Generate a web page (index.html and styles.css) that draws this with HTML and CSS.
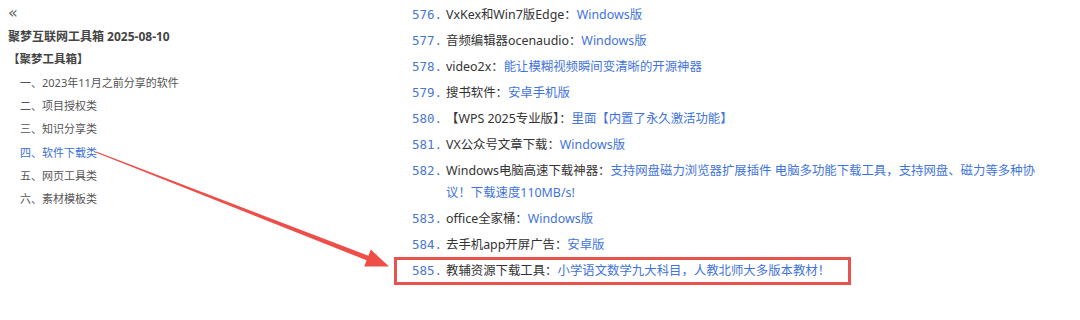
FILE: index.html
```html
<!DOCTYPE html>
<html lang="zh-CN">
<head>
  <meta charset="UTF-8">
  <title>聚梦互联网工具箱</title>
  <link rel="stylesheet" href="styles.css">
</head>
<body>

  <div class="page">
    <div class="toc">
      <div class="toc-toggle">&laquo;</div>
      <div class="toc-title">聚梦互联网工具箱 2025-08-10</div>
      <div class="toc-group">【聚梦工具箱】</div>
      <ul class="toc-list">
        <li>一、2023年11月之前分享的软件</li>
        <li>二、项目授权类</li>
        <li>三、知识分享类</li>
        <li class="active">四、软件下载类</li>
        <li>五、网页工具类</li>
        <li>六、素材模板类</li>
      </ul>
    </div>

    <ol class="soft-list">
      <li><span class="num">576.</span><span class="txt">VxKex和Win7版Edge：<a>Windows版</a></span></li>
      <li><span class="num">577.</span><span class="txt">音频编辑器ocenaudio：<a>Windows版</a></span></li>
      <li><span class="num">578.</span><span class="txt">video2x：<a>能让模糊视频瞬间变清晰的开源神器</a></span></li>
      <li><span class="num">579.</span><span class="txt">搜书软件：<a>安卓手机版</a></span></li>
      <li><span class="num">580.</span><span class="txt">【WPS 2025专业版】：<a>里面【内置了永久激活功能】</a></span></li>
      <li><span class="num">581.</span><span class="txt">VX公众号文章下载：<a>Windows版</a></span></li>
      <li><span class="num">582.</span><span class="txt">Windows电脑高速下载神器：<a>支持网盘磁力浏览器扩展插件 电脑多功能下载工具，支持网盘、磁力等多种协议！下载速度110MB/s!</a></span></li>
      <li><span class="num">583.</span><span class="txt">office全家桶：<a>Windows版</a></span></li>
      <li><span class="num">584.</span><span class="txt">去手机app开屏广告：<a>安卓版</a></span></li>
      <li class="marked"><span class="num">585.</span><span class="txt">教辅资源下载工具：<a>小学语文数学九大科目，人教北师大多版本教材！</a></span></li>
    </ol>
  </div>

  <!-- annotation arrow drawn over the screenshot -->
  <svg class="arrow" width="1080" height="320" viewBox="0 0 1080 320">
    <polygon fill="#ee4d48" points="96.2,151.5 368.4,255.7 370.8,249.6 389,266.5 364.2,266.4 366.6,260.3 95.8,152.5"/>
  </svg>

</body>
</html>
```

FILE: styles.css
```css
body {
  margin: 0;
  background: #fff;
  font-family: "Noto Sans", "Noto Sans CJK SC", sans-serif;
  color: #333;
}

.page {
  display: flex;
  height: 320px;
}

.toc {
  width: 396px;
  padding: 4px 0 0 8px;
  box-sizing: border-box;
}

.toc-toggle {
  font-family: "DejaVu Sans", sans-serif;
  font-size: 16px;
  line-height: 18px;
  color: #666;
}

.toc-title {
  margin-top: 5px;
  font-size: 12px;
  font-weight: bold;
  line-height: 20px;
  color: #444;
}

.toc-group {
  margin-top: 2px;
  font-size: 11.5px;
  font-weight: bold;
  line-height: 20px;
  color: #444;
}

.toc-list {
  list-style: none;
  margin: 2px 0 0;
  padding: 0 0 0 12px;
}

.toc-list li {
  font-size: 11px;
  line-height: 23.2px;
  color: #555;
}

.toc-list li.active {
  color: #3a6fd8;
}

.soft-list {
  list-style: none;
  margin: 0;
  padding: 4px 0 0 16px;
}

.soft-list li {
  display: flex;
  margin-bottom: 4px;
  font-size: 12.4px;
  line-height: 22px;
}

.num {
  width: 34px;
  flex: none;
  font-family: "DejaVu Sans Mono", monospace;
  font-size: 12.5px;
  color: #4a78d0;
}

.txt {
  width: 600px;
}

.txt a {
  color: #3f74dc;
}

.soft-list li.marked {
  position: relative;
}

.soft-list li.marked::after {
  content: "";
  position: absolute;
  left: -18px;
  top: -3px;
  width: 451px;
  height: 22px;
  border: 3px solid #e9534f;
}

.arrow {
  position: absolute;
  left: 0;
  top: 0;
  pointer-events: none;
}
```
